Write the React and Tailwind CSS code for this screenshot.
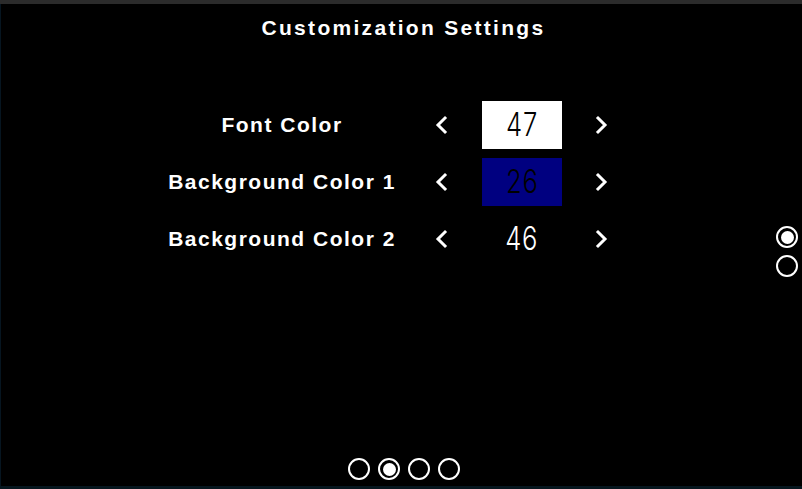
import React from "react";

const rows = [
  { label: "Font Color", value: "47", box: "bg-white text-black" },
  { label: "Background Color 1", value: "26", box: "bg-[#000080] text-black" },
  { label: "Background Color 2", value: "46", box: "bg-black text-white" },
];

function Chevron({ dir }) {
  return (
    <svg width="14" height="20" viewBox="0 0 14 20" className="block">
      <polyline
        points={dir === "left" ? "10,3 3,10 10,17" : "4,3 11,10 4,17"}
        fill="none"
        stroke="white"
        strokeWidth="3"
        strokeLinecap="square"
      />
    </svg>
  );
}

function Dot({ on }) {
  return (
    <div className="flex h-[22px] w-[22px] items-center justify-center rounded-full border-2 border-white">
      {on && <div className="h-[13px] w-[13px] rounded-full bg-white" />}
    </div>
  );
}

export default function App() {
  return (
    <div className="relative flex h-[489px] w-[802px] flex-col overflow-hidden bg-black font-['Liberation_Sans',Arial,sans-serif] text-white shadow-[inset_1px_0_0_#061520]">
      <div className="h-[4px] bg-[#2b2b2b]" />
      <div className="flex h-[48px] items-center justify-center pl-[5px] text-[21px] font-bold tracking-[2.3px]">
        Customization Settings
      </div>

      <div className="mt-[49px] flex flex-col gap-[9px]">
        {rows.map((r) => (
          <div key={r.label} className="flex h-[48px] items-center">
            <div className="ml-[152px] w-[260px] text-center text-[21px] font-bold tracking-[1.5px]">{r.label}</div>
            <div className="ml-[23px] flex w-[14px] justify-center"><Chevron dir="left" /></div>
            <div className={`ml-[33px] flex h-[48px] w-[80px] items-center justify-center ${r.box}`}>
              <span className="inline-block scale-x-[0.8] font-['Inter',sans-serif] text-[32px] font-light leading-none tracking-[1px]">{r.value}</span>
            </div>
            <div className="ml-[32px] flex w-[14px] justify-center"><Chevron dir="right" /></div>
          </div>
        ))}
      </div>

      <div className="absolute left-[776px] top-[226px] flex flex-col gap-[7px]">
        <Dot on />
        <Dot />
      </div>

      <div className="absolute left-[348px] top-[458px] flex gap-[8px]">
        <Dot />
        <Dot on />
        <Dot />
        <Dot />
      </div>

      <div className="mt-auto h-[3px] bg-[#06161e]" />
    </div>
  );
}
